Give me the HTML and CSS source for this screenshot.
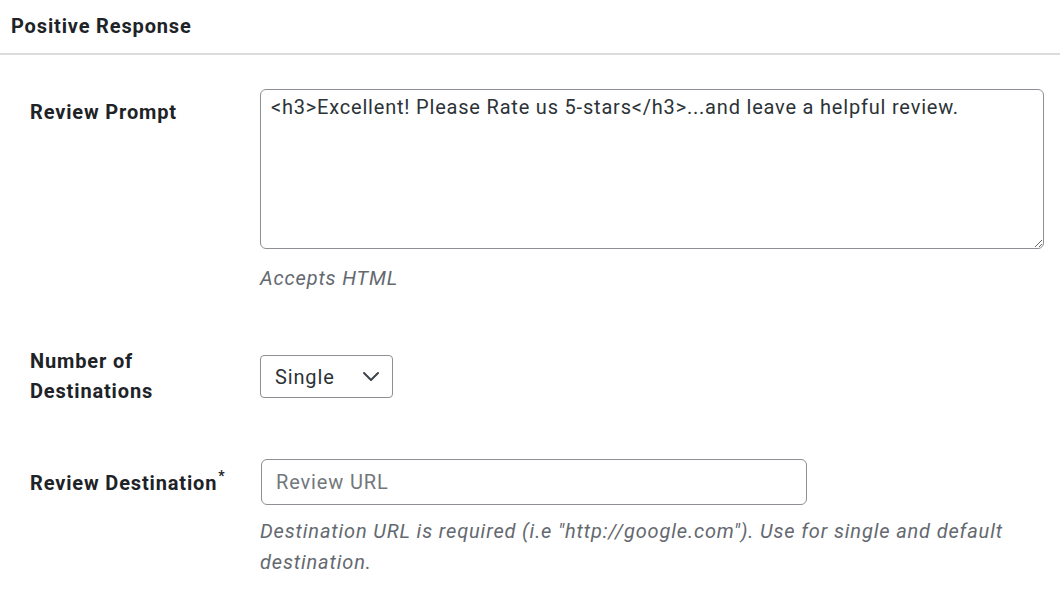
FILE: index.html
```html
<!DOCTYPE html>
<html lang="en">
<head>
    <meta charset="UTF-8">
    <meta name="viewport" content="width=device-width, initial-scale=1.0">
    <title>Positive Response</title>
    <link rel="stylesheet" href="styles.css">
</head>
<body>
    <h2 class="section-title">Positive Response</h2>

    <div class="form-row row-prompt">
        <label class="row-label" for="review-prompt">Review Prompt</label>
        <div class="row-field">
            <textarea id="review-prompt" class="prompt-box">&lt;h3&gt;Excellent! Please Rate us 5-stars&lt;/h3&gt;...and leave a helpful review.</textarea>
            <p class="description">Accepts HTML</p>
        </div>
    </div>

    <div class="form-row row-count">
        <label class="row-label" for="dest-count">Number of Destinations</label>
        <div class="row-field">
            <div class="select-wrap">
                <select id="dest-count" class="dest-select">
                    <option selected>Single</option>
                    <option>Multiple</option>
                </select>
                <svg class="chevron" width="18" height="11" viewBox="0 0 18 11">
                    <path d="M2 2 L9 9 L16 2" fill="none" stroke="#3c434a" stroke-width="2" stroke-linecap="round" stroke-linejoin="round"/>
                </svg>
            </div>
        </div>
    </div>

    <div class="form-row row-dest">
        <label class="row-label" for="review-url">Review Destination<sup>*</sup></label>
        <div class="row-field">
            <input type="text" id="review-url" class="url-input" placeholder="Review URL">
            <p class="description">Destination URL is required (i.e "http://google.com"). Use for single and default destination.</p>
        </div>
    </div>
</body>
</html>
```

FILE: styles.css
```css
body {
    margin: 0;
    background-color: #fff;
    font-family: Roboto, "Liberation Sans", sans-serif;
    font-size: 20px;
    letter-spacing: 0.85px;
    color: #1d2327;
}
.section-title {
    margin: 0;
    padding: 0 11px;
    height: 53px;
    line-height: 53px;
    font-size: 20px;
    font-weight: 700;
    border-bottom: 2px solid #dcdcde;
}
.form-row {
    display: flex;
    padding-left: 30px;
    padding-right: 16px;
}
.row-label {
    box-sizing: border-box;
    width: 230px;
    padding-right: 24px;
    flex-shrink: 0;
    font-weight: 700;
    line-height: 30px;
}
.row-label sup {
    font-size: 14px;
    line-height: 0;
    vertical-align: 9px;
    margin-left: 1px;
}
.row-field {
    flex: 1;
}
.description {
    margin: 0;
    font-style: italic;
    color: #646970;
    line-height: 31px;
}

.row-prompt {
    margin-top: 34px;
}
.row-prompt .row-label {
    padding-top: 8px;
}
.prompt-box {
    display: block;
    box-sizing: border-box;
    width: 100%;
    height: 160px;
    margin: 0;
    padding: 2px 10px;
    border: 1px solid #8c8f94;
    border-radius: 6px;
    font-family: inherit;
    font-size: 20px;
    letter-spacing: 0.8px;
    line-height: 30px;
    color: #2c3338;
}
.row-prompt .description {
    margin-top: 14px;
}

.row-count {
    margin-top: 52px;
}
.select-wrap {
    position: relative;
    width: 133px;
    margin-top: 9px;
}
.dest-select {
    appearance: none;
    -webkit-appearance: none;
    box-sizing: border-box;
    width: 133px;
    height: 43px;
    padding: 0 0 0 14px;
    border: 1px solid #8c8f94;
    border-radius: 4px;
    background-color: #fff;
    font-family: inherit;
    font-size: 20px;
    letter-spacing: 0.85px;
    color: #2c3338;
}
.chevron {
    position: absolute;
    right: 13px;
    top: 16px;
    pointer-events: none;
}

.row-dest {
    margin-top: 53px;
}
.row-dest .row-label {
    padding-top: 9px;
}
.url-input {
    display: block;
    box-sizing: border-box;
    width: 546px;
    height: 46px;
    margin: 0 0 0 1px;
    padding: 0 14px;
    border: 1px solid #8c8f94;
    border-radius: 6px;
    font-family: inherit;
    font-size: 20px;
    letter-spacing: 0.85px;
    color: #2c3338;
}
.url-input::placeholder {
    color: #72777c;
}
.row-dest .description {
    margin-top: 11px;
}
```
